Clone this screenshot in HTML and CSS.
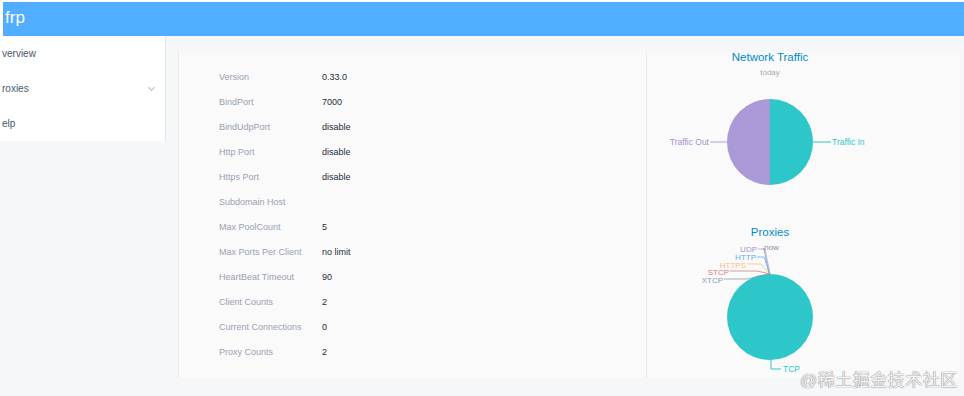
FILE: index.html
```html
<!DOCTYPE html>
<html>

	<head>
		<meta charset="UTF-8">
		<title>frp</title>
		<link rel="stylesheet" href="styles.css">
	</head>

	<body>
		<div class="header">
			<span class="brand">frp</span>
		</div>
		<div class="layout">
			<div class="side">
				<ul class="menu">
					<li class="item">verview</li>
					<li class="item">roxies<span class="arrow"></span></li>
					<li class="item">elp</li>
				</ul>
			</div>
			<div class="main">
				<div class="card">
					<div class="info">
						<table class="form" cellspacing="0">
							<tr><td class="lab">Version</td><td>0.33.0</td></tr>
							<tr><td class="lab">BindPort</td><td>7000</td></tr>
							<tr><td class="lab">BindUdpPort</td><td>disable</td></tr>
							<tr><td class="lab">Http Port</td><td>disable</td></tr>
							<tr><td class="lab">Https Port</td><td>disable</td></tr>
							<tr><td class="lab">Subdomain Host</td><td></td></tr>
							<tr><td class="lab">Max PoolCount</td><td>5</td></tr>
							<tr><td class="lab">Max Ports Per Client</td><td>no limit</td></tr>
							<tr><td class="lab">HeartBeat Timeout</td><td>90</td></tr>
							<tr><td class="lab">Client Counts</td><td>2</td></tr>
							<tr><td class="lab">Current Connections</td><td>0</td></tr>
							<tr><td class="lab">Proxy Counts</td><td>2</td></tr>
						</table>
					</div>
					<div class="charts">
						<svg class="chart" width="312" height="326" viewBox="0 0 312 326">
							<!-- 流量 -->
							<text class="title" x="123" y="9" text-anchor="middle">Network Traffic</text>
							<text class="sub" x="123" y="23" text-anchor="middle">today</text>
							<path d="M123,90 L123,47 A43,43 0 0 1 123,133 Z" fill="#2ec7c9" />
							<path d="M123,90 L123,133 A43,43 0 0 1 123,47 Z" fill="#ab98d6" />
							<line x1="63" y1="90" x2="80" y2="90" stroke="#b6a2de" />
							<text class="pl" x="62" y="93" text-anchor="end" fill="#a493d2">Traffic Out</text>
							<line x1="166" y1="90" x2="184" y2="90" stroke="#2ec7c9" />
							<text class="pl" x="185" y="93" fill="#2ec7c9">Traffic In</text>

							<!-- 代理 -->
							<text class="title" x="123" y="184" text-anchor="middle">Proxies</text>
							<circle cx="123" cy="265" r="43" fill="#2ec7c9" />
							<polyline points="124,308 124,317 134,317" fill="none" stroke="#2ec7c9" />
							<text class="pl" x="136" y="320" fill="#2ec7c9">TCP</text>

							<polyline points="111,197 118,197 123,222" fill="none" stroke="#b6a2de" stroke-width="0.8" />
							<text class="sl" x="110" y="200" text-anchor="end" fill="#a493d2">UDP</text>
							<polyline points="116,196 117,197 122,222" fill="none" stroke="#8d98b3" stroke-width="0.8" />
							<text class="sl" x="115" y="198" fill="#8a8f9c">.now</text>
							<polyline points="110,205 117,205 123,222" fill="none" stroke="#5ab1ef" stroke-width="0.8" />
							<text class="sl" x="109" y="208" text-anchor="end" fill="#5ab1ef">HTTP</text>
							<polyline points="100,212 114,212 123,222" fill="none" stroke="#ffb980" stroke-width="0.8" />
							<text class="sl" x="99" y="216" text-anchor="end" fill="#ffb980">HTTPS</text>
							<polyline points="83,219 110,219 123,222" fill="none" stroke="#d87a80" stroke-width="0.8" />
							<text class="sl" x="82" y="223" text-anchor="end" fill="#d87a80">STCP</text>
							<polyline points="77,227 100,227 123,222" fill="none" stroke="#8d98b3" stroke-width="0.8" />
							<text class="sl" x="76" y="231" text-anchor="end" fill="#8d98b3">XTCP</text>
						</svg>
					</div>
				</div>
			</div>
		</div>
		<div class="mark">@稀土掘金技术社区</div>
	</body>

</html>
```
FILE: styles.css
```css
body {
	margin: 0;
	background-color: #fff;
	font-family: "Liberation Sans", Arial, "Noto Sans CJK SC", sans-serif;
	overflow: hidden;
}

.header {
	height: 34px;
	margin: 2px 0 0 3px;
	background-color: #50adff;
	display: flex;
	align-items: center;
}

.brand {
	color: #fff;
	font-size: 17px;
	padding-left: 2px;
	margin-top: -2px;
}

.layout {
	display: flex;
	height: 360px;
	background-color: #f6f7f8;
}

.side {
	width: 165px;
	height: 105px;
	background-color: #fff;
	border-right: 1px solid #e4e6e8;
	overflow: hidden;
}

.menu {
	list-style: none;
	margin: 0;
	padding: 0;
}

.item {
	height: 35px;
	line-height: 36px;
	font-size: 10px;
	color: #48576a;
	padding: 0 11px 0 2px;
	display: flex;
	justify-content: space-between;
	align-items: center;
}

.arrow {
	width: 4px;
	height: 4px;
	border-right: 1px solid #b4bccc;
	border-bottom: 1px solid #b4bccc;
	transform: rotate(45deg);
	margin-top: -3px;
}

.main {
	flex: 1;
	padding: 16px 4px 0 12px;
}

.card {
	display: flex;
	height: 326px;
	background-color: #fafafa;
	border-left: 1px solid #ebebeb;
}

.info {
	width: 468px;
	border-right: 1px solid #e9e9e9;
	padding: 12px 0 0 40px;
	box-sizing: border-box;
}

.form td {
	height: 25px;
	padding: 0;
	font-size: 9px;
	color: #1f2d3d;
}

.form .lab {
	width: 103px;
	color: #99a1b3;
}

.charts {
	flex: 1;
}

.chart {
	display: block;
	font-family: "Liberation Sans", Arial, sans-serif;
}

.title {
	font-size: 11.5px;
	fill: #008acd;
}

.sub {
	font-size: 8px;
	fill: #aaa;
}

.pl {
	font-size: 8.5px;
}

.sl {
	font-size: 8px;
}

.mark {
	position: absolute;
	left: 800px;
	top: 366px;
	font-size: 17px;
	color: #f4f4f4;
	text-shadow: 0 0 1px #777, 0 0 1px #999;
	letter-spacing: 0.5px;
}
```
